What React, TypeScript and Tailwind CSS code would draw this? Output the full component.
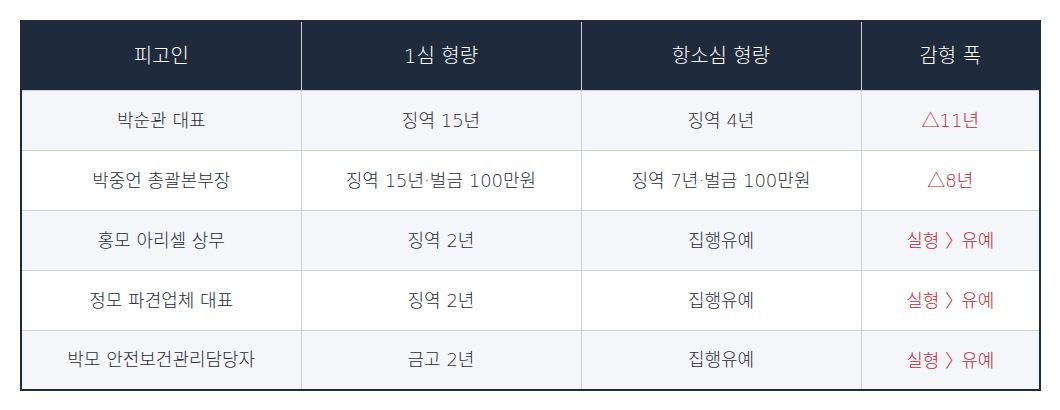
const rows = [
  { name: "박순관 대표", first: "징역 15년", appeal: "징역 4년", cut: "△11년" },
  { name: "박중언 총괄본부장", first: "징역 15년·벌금 100만원", appeal: "징역 7년·벌금 100만원", cut: "△8년" },
  { name: "홍모 아리셀 상무", first: "징역 2년", appeal: "집행유예", cut: "" },
  { name: "정모 파견업체 대표", first: "징역 2년", appeal: "집행유예", cut: "" },
  { name: "박모 안전보건관리담당자", first: "금고 2년", appeal: "집행유예", cut: "" },
];

function Cut({ value }: { value: string }) {
  if (value) return <>{value}</>;
  return (
    <>
      실형<span className="ml-[6px] mr-[-2px] font-['Noto_Sans_CJK_KR']">〉</span>유예
    </>
  );
}

export default function App() {
  return (
    <div className="w-[1060px] h-[410px] bg-white p-5 font-['DejaVu_Sans','Noto_Sans_CJK_KR',sans-serif] font-light">
      <table className="w-[1021px] table-fixed border-collapse border-2 border-[#1f2a3d] text-center">
        <colgroup>
          <col className="w-[280px]" />
          <col className="w-[280px]" />
          <col className="w-[280px]" />
          <col />
        </colgroup>
        <thead>
          <tr className="h-[69px] bg-[#1f2a3d] text-[20px] text-white">
            <th className="border-r border-[#c9ced8] font-light">피고인</th>
            <th className="border-r border-[#c9ced8] font-light">1심 형량</th>
            <th className="border-r border-[#c9ced8] font-light">항소심 형량</th>
            <th className="font-light">감형 폭</th>
          </tr>
        </thead>
        <tbody className="text-[18px] text-[#262c3a]">
          {rows.map((r, i) => (
            <tr key={i} className={`h-[60px] ${i % 2 === 0 ? "bg-[#f5f6fa]" : "bg-white"}`}>
              <td className="border border-[#cdd1dc]">{r.name}</td>
              <td className="border border-[#cdd1dc]">{r.first}</td>
              <td className="border border-[#cdd1dc]">{r.appeal}</td>
              <td className="border border-[#cdd1dc] text-[#c8232c]">
                <Cut value={r.cut} />
              </td>
            </tr>
          ))}
        </tbody>
      </table>
    </div>
  );
}
